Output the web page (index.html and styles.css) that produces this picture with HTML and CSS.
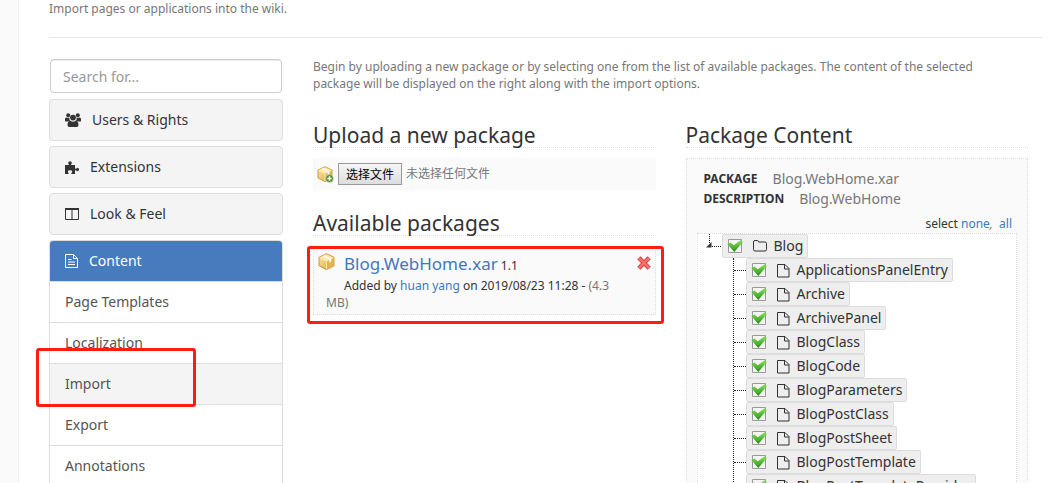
FILE: index.html
```html
<!DOCTYPE html>
<html lang="en">
<head>
<meta charset="utf-8">
<title>Import</title>
<link rel="stylesheet" href="styles.css">
</head>
<body>
<svg class="symbols" aria-hidden="true">
  <defs>
    <linearGradient id="gold" x1="0" y1="0" x2="1" y2="1"><stop offset="0" stop-color="#fbe7a2"/><stop offset="1" stop-color="#e0a640"/></linearGradient>
    <symbol id="box" viewBox="0 0 16 16">
      <path d="M8 .7 15 4v8l-7 3.600L1 12V4z" fill="url(#gold)" stroke="#cf9c45"/>
      <path d="M8 1.200 14.400 4.200 8 7.500 1.600 4.200z" fill="#fbe9ac"/>
      <path d="M8 7.500 14.400 4.300v7.400L8 15z" fill="#e6b552"/>
      <path d="M1.600 4.300 8 7.500M8 7.500l6.400-3.200M8 8v7" stroke="#fff3cb" stroke-width=".8" fill="none"/>
      <path d="m4.200 3 6.500 3.100v3l1.800-1V5.200L6 2.100z" fill="#fffbe8"/>
    </symbol>
    <symbol id="page" viewBox="0 0 13 15">
      <path d="M.5 1.500h7.500l4 4v8.500H.5zM7.500 1.500v4.500h4.500" fill="none" stroke="#333"/>
    </symbol>
  </defs>
</svg>
<main class="page">
  <p class="intro">Import pages or applications into the wiki.</p>
  <div class="layout">
    <nav class="sidebar">
      <input class="search" type="text" placeholder="Search for..." aria-label="Search for...">
      <a class="category" href="#users">
        <svg width="16" height="14" viewBox="0 0 16 14" fill="#333"><circle cx="3.2" cy="2.3" r="2"/><circle cx="12.8" cy="2.3" r="2"/><path d="M0 8V6Q0 4.4 1.4 4.4q1.6.8 3 .1Q4 7 5.4 7.8q-1.6 0-2.2.8H1.2Q0 8.6 0 8zM16 8V6q0-1.6-1.4-1.6-1.6.8-3 .1Q12 7 10.600 7.800q1.600 0 2.200.8h2q1.200 0 1.200-.6z"/><circle cx="8" cy="4.600" r="2.900"/><path d="M2.500 12q0-4 2.900-4.200Q8 9.700 10.600 7.800q2.900.2 2.900 4.200 0 2-1.800 2H4.300q-1.800 0-1.800-2z"/></svg>
        <span>Users &amp; Rights</span>
      </a>
      <a class="category" href="#extensions">
        <svg width="14" height="13" viewBox="0 0 14 13" fill="#333"><path d="M0 4h4.200Q3.200 2.900 3.200 2q0-1.700 1.800-1.700T6.800 2q0 .9-1 2H10v3.500q.9.500 1.400-.1.400-.6 1.200-.6Q14 6.800 14 8.500t-1.400 1.700q-.8 0-1.200-.6-.5-.6-1.400-.1V13H6.500q-.4-.9.200-1.500.5-.5.500-1.100Q7.200 9.300 5 9.300t-2.200 1.100q0 .6.500 1.100.6.600.2 1.500H0z"/></svg>
        <span>Extensions</span>
      </a>
      <a class="category" href="#look">
        <svg width="14" height="12" viewBox="0 0 14 12"><path d="M.5 1v10.500h13V1M7 1v10" fill="none" stroke="#333"/><path d="M0 0h14v2H0z" fill="#333"/></svg>
        <span>Look &amp; Feel</span>
      </a>
      <div class="group">
        <a class="category active" href="#content">
          <svg width="13" height="14" viewBox="0 0 13 14" fill="none" stroke="#fff"><path d="M.5.5h8l4 4v9H.5zM8.500.5v4h4M3 5.500h3.500M3 8h7M3 10.500h7"/></svg>
          <span>Content</span>
        </a>
        <a class="item" href="#templates">Page Templates</a>
        <a class="item" href="#localization">Localization</a>
        <a class="item current" href="#import">Import<span class="marker import-marker"></span></a>
        <a class="item" href="#export">Export</a>
        <a class="item" href="#annotations">Annotations</a>
      </div>
    </nav>
    <div class="content">
      <p class="hint">Begin by uploading a new package or by selecting one from the list of available packages. The content of the selected package will be displayed on the right along with the import options.</p>
      <div class="columns">
        <div class="left">
          <section>
            <h2>Upload a new package</h2>
            <div class="upload">
              <svg width="17" height="17" viewBox="0 0 17 17"><use href="#box" width="16" height="16"/><circle cx="12.500" cy="12.500" r="3.900" fill="#4d8a2a" stroke="#dff0cf" stroke-width=".6"/><path d="M12.500 10.300v4.400M10.300 12.500h4.400" stroke="#fff" stroke-width="1.500"/></svg>
              <button class="choose" type="button">选择文件</button>
              <span>未选择任何文件</span>
            </div>
          </section>
          <section>
            <h2>Available packages</h2>
            <div class="package">
              <svg class="package-icon" width="17" height="17"><use href="#box"/></svg>
              <div class="package-text">
                <div class="package-name"><a href="#package">Blog.WebHome.xar</a> <span>1.1</span></div>
                <p class="package-meta">Added by <a href="#user">huan yang</a> on 2019/08/23 11:28 - <span>(4.3 MB)</span></p>
              </div>
              <button class="delete" type="button" aria-label="Delete package"><svg width="14" height="14" viewBox="0 0 14 14"><path d="m1.800 1.800 10.400 10.400m0-10.400L1.800 12.200" stroke="#d8403f" stroke-width="4.400"/><path d="m1.800 1.800 10.400 10.400m0-10.400L1.800 12.200" stroke="#f4706c" stroke-width="2.400"/></svg></button>
              <span class="marker package-marker"></span>
            </div>
          </section>
        </div>
        <section>
          <h2>Package Content</h2>
          <div class="details">
            <dl>
              <div><dt>PACKAGE</dt><dd>Blog.WebHome.xar</dd></div>
              <div><dt>DESCRIPTION</dt><dd>Blog.WebHome</dd></div>
            </dl>
            <p class="select">select <a href="#none">none</a><i>,</i> <a class="all" href="#all">all</a></p>
            <div class="tree">
              <div class="root">
                <svg class="toggle" width="16" height="24" viewBox="0 0 16 24"><path d="M3.500 0v9" stroke="#222" stroke-dasharray="1 1"/><path d="M6 12.500h10" stroke="#222" stroke-dasharray="1 1"/><path d="M5.500 8v5.500H0z" fill="#333"/></svg>
                <label class="node"><input type="checkbox" checked><svg width="14" height="12" viewBox="0 0 14 12"><path d="M.5 2Q.5.5 2 .5h2.500Q5.500.5 5.500 2h6.500q1.500 0 1.500 1.500v6q0 1.500-1.500 1.500H2Q.5 11 .5 9.500z" fill="none" stroke="#333"/></svg><span>Blog</span></label>
              </div>
              <ul>
                <li><label class="node"><input type="checkbox" checked><svg width="13" height="15"><use href="#page"/></svg><span>ApplicationsPanelEntry</span></label></li>
                <li><label class="node"><input type="checkbox" checked><svg width="13" height="15"><use href="#page"/></svg><span>Archive</span></label></li>
                <li><label class="node"><input type="checkbox" checked><svg width="13" height="15"><use href="#page"/></svg><span>ArchivePanel</span></label></li>
                <li><label class="node"><input type="checkbox" checked><svg width="13" height="15"><use href="#page"/></svg><span>BlogClass</span></label></li>
                <li><label class="node"><input type="checkbox" checked><svg width="13" height="15"><use href="#page"/></svg><span>BlogCode</span></label></li>
                <li><label class="node"><input type="checkbox" checked><svg width="13" height="15"><use href="#page"/></svg><span>BlogParameters</span></label></li>
                <li><label class="node"><input type="checkbox" checked><svg width="13" height="15"><use href="#page"/></svg><span>BlogPostClass</span></label></li>
                <li><label class="node"><input type="checkbox" checked><svg width="13" height="15"><use href="#page"/></svg><span>BlogPostSheet</span></label></li>
                <li><label class="node"><input type="checkbox" checked><svg width="13" height="15"><use href="#page"/></svg><span>BlogPostTemplate</span></label></li>
                <li><label class="node"><input type="checkbox" checked><svg width="13" height="15"><use href="#page"/></svg><span>BlogPostTemplateProvider</span></label></li>
              </ul>
            </div>
          </div>
        </section>
      </div>
    </div>
  </div>
</main>
</body>
</html>
```
FILE: styles.css
```css
* { box-sizing: border-box; }
body {
  margin: 0;
  height: 100vh;
  overflow: hidden;
  padding-left: 18px;
  background: #fafafa;
  color: #333;
  font: 14px/20px "Noto Sans", "Noto Sans CJK SC", sans-serif;
}
a { color: #4078c0; text-decoration: none; }
p, h2, dl, dd, ul { margin: 0; padding: 0; }
svg { display: block; flex: none; }
.symbols { position: absolute; width: 0; height: 0; }
.page {
  min-height: 100vh;
  padding: 0 15px 0 30px;
  background: #fff;
  border-left: 1px solid #f0f0f0;
}
.intro {
  height: 38px;
  border-bottom: 1px solid #e8e8e8;
  color: #777;
  font-size: 12px;
  line-height: 17px;
}
.layout {
  display: grid;
  grid-template-columns: 234px minmax(0, 1fr);
  gap: 30px;
  padding: 20px 15px 0 0;
}

/* Sidebar */
.sidebar { display: flex; flex-direction: column; gap: 5px; }
.search {
  height: 34px;
  margin: 1px;
  padding: 0 12px;
  border: 1px solid #ccc;
  border-radius: 4px;
  box-shadow: inset 0 1px 1px rgba(0, 0, 0, .075);
  font: inherit;
}
.search::placeholder { color: #999; opacity: 1; }
.category {
  display: flex;
  align-items: center;
  gap: 11px;
  height: 42px;
  padding: 0 15px;
  border: 1px solid #ddd;
  border-radius: 4px;
  background: #f4f4f4;
  color: #333;
}
.group { border: 1px solid #ddd; border-radius: 4px 4px 0 0; }
.group .active {
  height: 40px;
  border: 0;
  border-radius: 3px 3px 0 0;
  background: #467cbd;
  color: #fff;
}
.item {
  display: block;
  position: relative;
  padding: 10px 15px;
  border-top: 1px solid #ddd;
  color: #555;
}
.current { background: #f4f4f4; }
.marker {
  position: absolute;
  z-index: 2;
  border: 3px solid #ff1d12;
  border-radius: 3px;
  pointer-events: none;
}
.import-marker { left: -14px; top: -16px; width: 160px; height: 59px; }
.package-marker { inset: -1px -9px -10px -7px; }

/* Content */
.hint { padding-right: 15px; color: #777; font-size: 12px; line-height: 17px; }
.columns {
  display: grid;
  grid-template-columns: repeat(2, minmax(0, 1fr));
  gap: 30px;
  padding-top: 31px;
}
.left { display: flex; flex-direction: column; gap: 21px; }
h2 {
  height: 25px;
  margin-bottom: 10px;
  border-bottom: 1px dotted #ddd;
  font-size: 21px;
  font-weight: 400;
  line-height: 24px;
}
.upload {
  display: flex;
  align-items: center;
  gap: 4px;
  height: 32px;
  padding: 0 4px;
  background: #fafafa;
  color: #777;
  font-size: 12px;
}
.choose {
  height: 22px;
  padding: 0 7px;
  border: 1px solid #999;
  border-radius: 0;
  background: linear-gradient(#f6f6f6, #ddd);
  color: #000;
  font: 12px/20px "Noto Sans CJK SC", sans-serif;
}
.package {
  display: flex;
  position: relative;
  padding: 6px 4px 3px;
  border: 1px dotted #ddd;
  background: #fafafa;
}
.package-text { flex: 1; padding: 0 14px 0 8px; }
.package-icon { margin-right: -17px; }
.package-name { padding-left: 18px; line-height: 22px; font-size: 12px; }
.package-name a { font-size: 17px; }
.package-meta { text-indent: 18px; font-size: 12px; line-height: 17px; }
.package-meta span { color: #777; }
.delete {
  align-self: flex-start;
  margin-top: 3px;
  padding: 0;
  border: 0;
  background: none;
}
.details {
  padding: 10px;
  border: 1px dotted #ddd;
  background: #fafafa;
}
dl { padding: 0 7px; }
dl div { display: flex; gap: 15px; }
dt { font-size: 12px; font-weight: 700; }
dd { color: #777; }
.select {
  padding: 6px 5px 0 0;
  font-size: 12px;
  line-height: 18px;
  text-align: right;
}
.select i { color: #777; }
.all { margin-left: 3px; }
.tree { padding-left: 8px; border: 1px dotted #ddd; background: #fff; }
.root { display: flex; }
.node {
  display: inline-flex;
  align-items: center;
  height: 24px;
  padding: 0 4px;
  border: 1px solid #ddd;
  border-radius: 2px;
  background: #eee;
}
.node input {
  appearance: none;
  width: 16px;
  height: 16px;
  margin: 0 10px 0 0;
  background: url("data:image/svg+xml,%3Csvg xmlns='http://www.w3.org/2000/svg' viewBox='0 0 16 16'%3E%3Cdefs%3E%3ClinearGradient id='g' x2='0' y2='1'%3E%3Cstop stop-color='%2388e060'/%3E%3Cstop offset='1' stop-color='%23259010'/%3E%3C/linearGradient%3E%3C/defs%3E%3Cpath d='M1.500 1.500h13v13h-13z' fill='%23f4f4f4' stroke='%23999'/%3E%3Cpath d='M.3 6 3.500 4.500l3.300 2.700L13.500 2.300 16 4 7.300 14z' fill='url(%23g)'/%3E%3C/svg%3E");
}
.node svg { margin-right: 7px; }
ul { margin-left: 27px; border-left: 1px dotted #222; list-style: none; }
li { display: flex; align-items: center; }
li::before { width: 12px; border-top: 1px dotted #222; content: ""; }
```
